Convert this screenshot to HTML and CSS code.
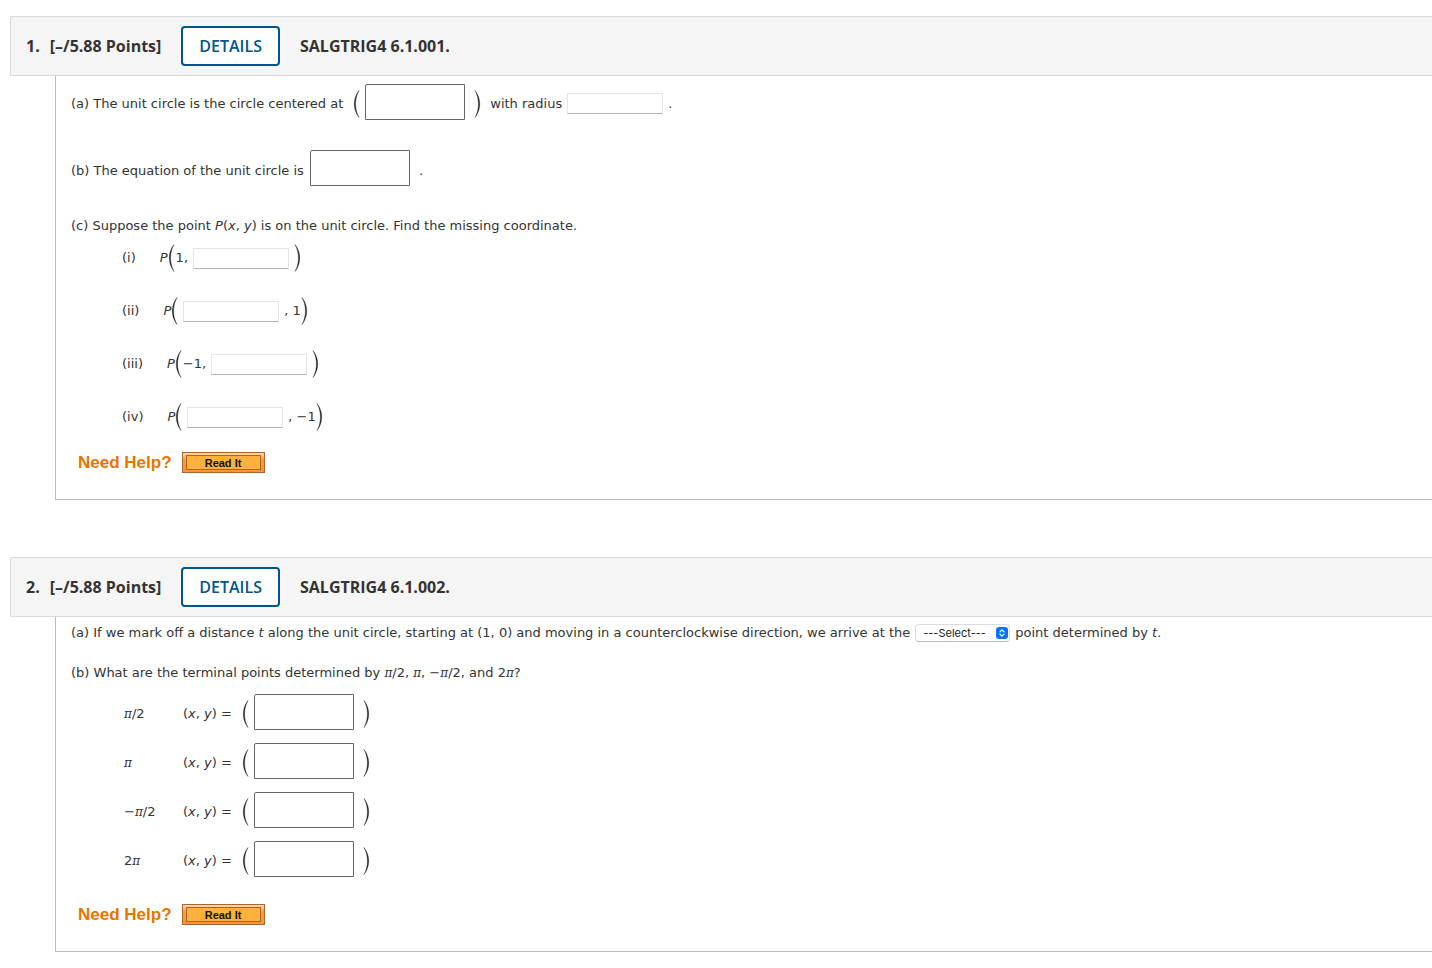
FILE: index.html
```html
<!DOCTYPE html>
<html lang="en">
<head>
<meta charset="utf-8">
<title>Assignment</title>
<link rel="stylesheet" href="styles.css">
</head>
<body>
<svg class="defs" width="0" height="0" aria-hidden="true">
  <symbol id="open" viewBox="0 0 7 28"><path d="M6 .5C-.3 8.500-.3 19.500 6 27.500 1.400 19.500 1.400 8.500 6 .5Z" fill="#222" stroke="#222" stroke-width=".4"/></symbol>
  <symbol id="close" viewBox="0 0 7 28"><path d="M1 .5C7.300 8.500 7.300 19.500 1 27.500 5.600 19.500 5.600 8.500 1 .5Z" fill="#222" stroke="#222" stroke-width=".4"/></symbol>
</svg>
<main>
  <section class="question">
    <header class="bar">
      <h2 class="title"><span class="num">1.</span>[–/5.88 Points]</h2>
      <button class="details" type="button">DETAILS</button>
      <span class="code">SALGTRIG4 6.1.001.</span>
    </header>
    <div class="body">
      <div class="row first">
        <label for="center">(a) The unit circle is the circle centered at</label>
        <svg class="paren wide"><use href="#open"/></svg>
        <input class="math" id="center" type="text">
        <svg class="paren after"><use href="#close"/></svg>
        <label class="gap-l" for="radius">with radius</label>
        <input class="blank" id="radius" type="text"><span class="stop">.</span>
      </div>
      <div class="row second">
        <label class="low" for="equation">(b) The equation of the unit circle is</label>
        <input class="math gap" id="equation" type="text"><span class="low end">.</span>
      </div>
      <p class="prompt">(c) Suppose the point <i>P</i>(<i>x</i>, <i>y</i>) is on the unit circle. Find the missing coordinate.</p>
      <div class="parts">
        <div class="part"><label for="p1">(i)</label><i>P</i><svg class="paren"><use href="#open"/></svg><span class="lead">1,</span><input class="blank" id="p1" type="text"><svg class="paren near"><use href="#close"/></svg></div>
        <div class="part"><label for="p2">(ii)</label><i>P</i><svg class="paren"><use href="#open"/></svg><input class="blank" id="p2" type="text"><span class="stop">, 1</span><svg class="paren"><use href="#close"/></svg></div>
        <div class="part"><label for="p3">(iii)</label><i>P</i><svg class="paren"><use href="#open"/></svg><span class="lead">−1,</span><input class="blank" id="p3" type="text"><svg class="paren near"><use href="#close"/></svg></div>
        <div class="part"><label for="p4">(iv)</label><i>P</i><svg class="paren"><use href="#open"/></svg><input class="blank" id="p4" type="text"><span class="stop">, −1</span><svg class="paren"><use href="#close"/></svg></div>
      </div>
      <div class="help"><span>Need Help?</span><button class="read" type="button"><span>Read It</span></button></div>
    </div>
  </section>

  <section class="question">
    <header class="bar">
      <h2 class="title"><span class="num">2.</span>[–/5.88 Points]</h2>
      <button class="details" type="button">DETAILS</button>
      <span class="code">SALGTRIG4 6.1.002.</span>
    </header>
    <div class="body">
      <div class="choice">
        <label for="kind">(a) If we mark off a distance <i>t</i> along the unit circle, starting at (1, 0) and moving in a counterclockwise direction, we arrive at the</label>
        <span class="picker">
          <select id="kind"><option>---Select---</option></select>
          <svg class="arrows" viewBox="0 0 12 12" aria-hidden="true"><rect width="12" height="12" rx="3" fill="#0a74f6"/><path d="M4 4.800 6 2.800 8 4.800M4 7.200 6 9.200 8 7.200" fill="none" stroke="#fff" stroke-width="1.200" stroke-linecap="round" stroke-linejoin="round"/></svg>
        </span>
        <span>point determined by <i>t</i>.</span>
      </div>
      <p class="prompt terminal">(b) What are the terminal points determined by <i class="pi">π</i>/2, <i class="pi">π</i>, −<i class="pi">π</i>/2, and 2<i class="pi">π</i>?</p>
      <div class="points">
        <div class="point"><span class="angle"><i class="pi">π</i>/2</span><label for="t1">(<i>x</i>, <i>y</i>) =</label><svg class="paren wide"><use href="#open"/></svg><input class="math" id="t1" type="text"><svg class="paren after"><use href="#close"/></svg></div>
        <div class="point"><span class="angle"><i class="pi">π</i></span><label for="t2">(<i>x</i>, <i>y</i>) =</label><svg class="paren wide"><use href="#open"/></svg><input class="math" id="t2" type="text"><svg class="paren after"><use href="#close"/></svg></div>
        <div class="point"><span class="angle">−<i class="pi">π</i>/2</span><label for="t3">(<i>x</i>, <i>y</i>) =</label><svg class="paren wide"><use href="#open"/></svg><input class="math" id="t3" type="text"><svg class="paren after"><use href="#close"/></svg></div>
        <div class="point"><span class="angle">2<i class="pi">π</i></span><label for="t4">(<i>x</i>, <i>y</i>) =</label><svg class="paren wide"><use href="#open"/></svg><input class="math" id="t4" type="text"><svg class="paren after"><use href="#close"/></svg></div>
      </div>
      <div class="help"><span>Need Help?</span><button class="read" type="button"><span>Read It</span></button></div>
    </div>
  </section>
</main>
</body>
</html>
```

FILE: styles.css
```css
* { box-sizing: border-box; }
body {
  margin: 0;
  background: #fff;
  color: #333;
  font: 13px/18px Verdana, "DejaVu Sans", sans-serif;
}
.defs { position: absolute; }
main { padding: 16px 0 16px 10px; }
.question + .question { margin-top: 57px; }
.bar {
  display: flex;
  align-items: center;
  height: 60px;
  padding-left: 15px;
  background: #f5f5f5;
  border: 1px solid #d9d9d9;
  border-right: 0;
  border-radius: 2px 0 0 2px;
  font: bold 16px/22px "Open Sans", sans-serif;
}
.title { margin: 0; font: inherit; }
.num { margin-right: 10px; }
.details {
  height: 40px;
  margin: 0 20px;
  padding: 0 16px;
  background: #fff;
  border: 2px solid #00568b;
  border-radius: 4px;
  color: #00568b;
  font: 600 16px/22px "Open Sans", sans-serif;
}
.body {
  margin-left: 45px;
  padding: 8px 0 26px 15px;
  border-left: 1px solid #bbb;
  border-bottom: 1px solid #bbb;
}
.row, .part, .point, .choice { display: flex; align-items: center; white-space: nowrap; }
.first label, .first .stop { padding-top: 4px; }
.first .blank { margin-top: 2px; }
.second { margin-top: 30px; }
.paren { flex: none; width: 7px; height: 28px; }
.wide { margin: 4px 5px 0 10px; }
.after { margin: 4px 0 0 9px; }
.near { margin-left: 5px; }
.gap-l { margin-left: 9px; }
.math {
  width: 100px;
  height: 36px;
  padding: 4px;
  border: 1px solid #666;
  border-top-left-radius: 2px;
  font: inherit;
}
.gap { margin-left: 6px; }
.low { margin-top: 6px; }
.end { margin-left: 9px; }
.blank {
  width: 96px;
  height: 21px;
  margin-left: 5px;
  padding: 2px;
  border: 1px solid #e6e6e6;
  border-bottom-color: #b3b3b3;
  font: inherit;
}
.stop { margin-left: 5px; }
.prompt { margin: 31px 0 0; }
.parts { display: grid; gap: 25px; margin: 9px 0 0 51px; }
.part { height: 28px; }
.part label { margin-right: 24px; }
.lead { margin-left: 1px; }
.help {
  display: flex;
  align-items: center;
  gap: 10px;
  margin: 21px 0 0 7px;
  color: #e77500;
  font: bold 17px/21px "Liberation Sans", Arial, sans-serif;
}
.read {
  width: 83px;
  height: 21px;
  padding: 2px 3px;
  background: linear-gradient(#ffdcb0, #ff9a35 35%, #ff922b);
  border: 1px solid #a8642a;
  color: #111;
  font: bold 11px/15px "Liberation Sans", Arial, sans-serif;
}
.read span {
  display: block;
  height: 15px;
  background: #ffb13b;
  border: 1px solid #a8642a;
}
.choice { height: 16px; }
.picker { position: relative; margin: 0 5px; }
.picker select {
  display: block;
  width: 95px;
  height: 18px;
  padding: 0 20px 0 7px;
  appearance: none;
  background: #fff;
  border: 1px solid #ddd;
  border-bottom-color: #bbb;
  border-radius: 4px;
  color: #222;
  font: 11px/16px Inter, sans-serif;
}
.arrows { position: absolute; top: 3px; right: 2px; width: 12px; height: 12px; pointer-events: none; }
.pi { font-family: "DejaVu Serif", serif; font-size: 12px; line-height: 1; }
.terminal { margin-top: 23px; }
.points { display: grid; gap: 13px; margin: 12px 0 0 53px; }
.point label, .angle { padding-top: 3px; }
.angle { width: 59px; }
.points + .help { margin-top: 27px; }
```
